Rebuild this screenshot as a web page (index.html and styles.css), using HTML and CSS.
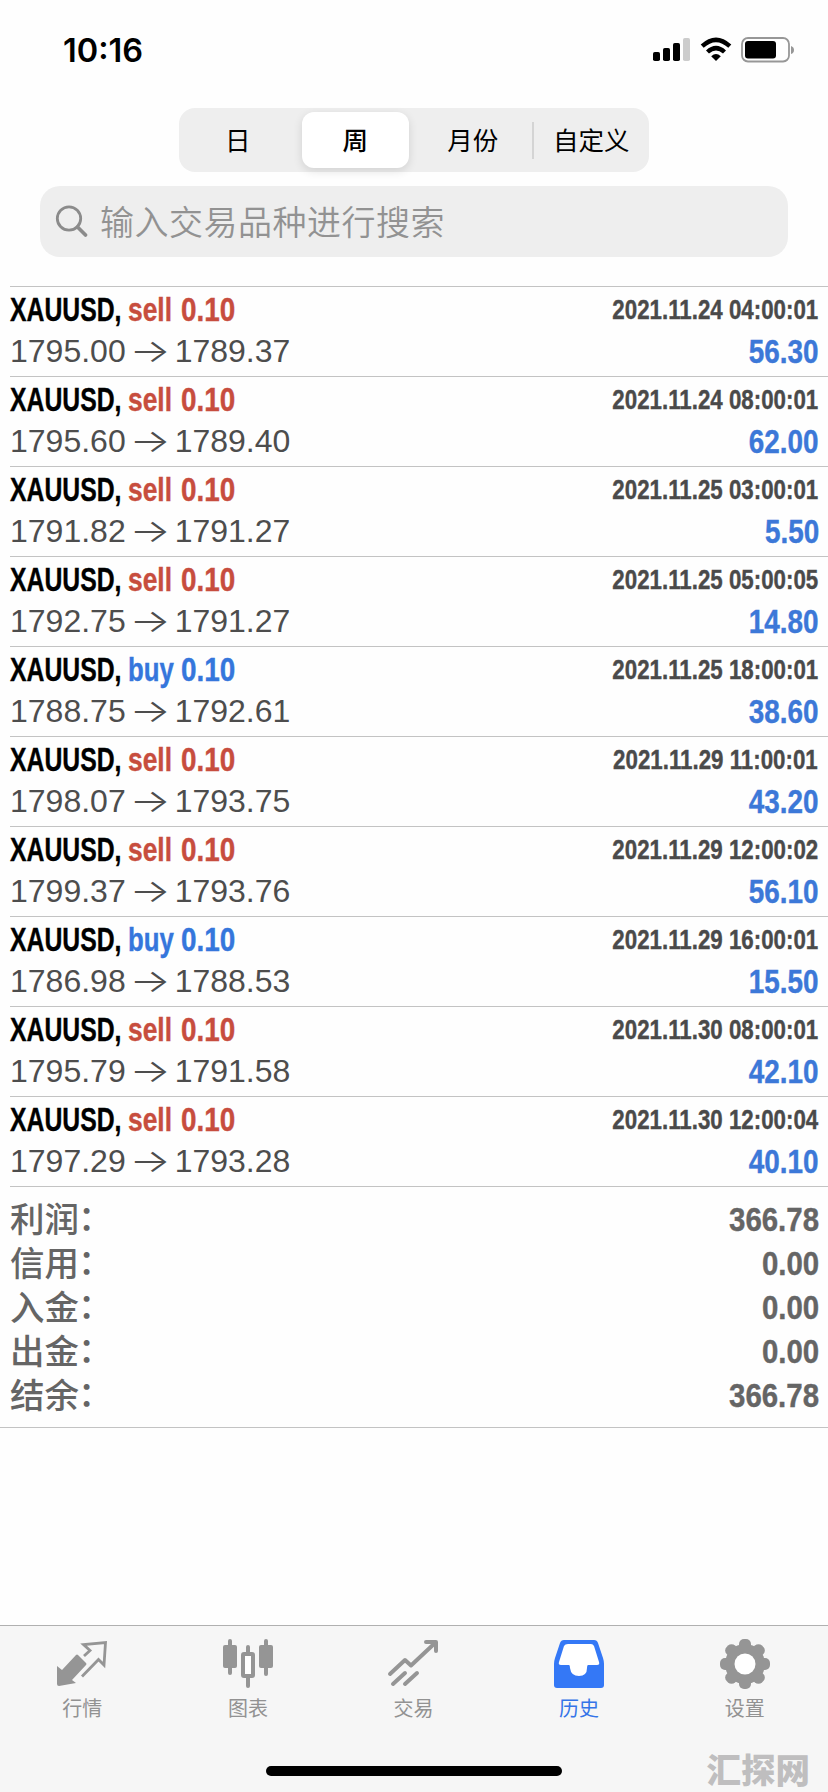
FILE: index.html
```html
<!DOCTYPE html>
<html lang="zh-CN">
<head>
<meta charset="utf-8">
<title>历史</title>
<link rel="stylesheet" href="styles.css">
</head>
<body>
<div class="phone">
  <header class="status">
    <div class="time">10:16</div>
    <div class="indicators">
      <svg width="38" height="24" viewBox="0 0 38 24"><rect x="0" y="14" width="7" height="9" rx="1.8"/><rect x="10" y="10" width="7" height="13" rx="1.8"/><rect x="20" y="5" width="7" height="18" rx="1.8"/><rect x="30" y="0" width="7" height="23" rx="1.8" fill="#ccc"/></svg>
      <svg class="wifi" width="32" height="24" viewBox="0 0 32 24"><path d="M2.200 9.200Q16-3.500 29.800 9.200M7.500 15Q16 7.200 24.500 15" fill="none" stroke="#000" stroke-width="4.400"/><path d="M11.200 19.200Q16 15 20.800 19.200L16 24Z"/></svg>
      <svg class="battery" width="54" height="26" viewBox="0 0 54 26"><rect x="1" y="1" width="47" height="23.500" rx="6" fill="none" stroke="#979797" stroke-width="1.800"/><rect x="4" y="4" width="31" height="17.500" rx="3"/><path d="M50 9Q53 10 53 13T50 17Z" fill="#979797"/></svg>
    </div>
  </header>
  <nav class="segments">
    <span class="segment">日</span>
    <span class="segment selected">周</span>
    <span class="segment">月份</span>
    <span class="segment divided">自定义</span>
  </nav>
  <div class="search">
    <svg width="34" height="34" viewBox="0 0 34 34"><circle cx="14" cy="13.500" r="11.700" fill="none" stroke="#8b8b8b" stroke-width="2.800"/><path d="M22.500 22L30.500 30" stroke="#8b8b8b" stroke-width="3.800" stroke-linecap="round"/></svg>
    <span>输入交易品种进行搜索</span>
  </div>
  <main class="deals" id="deals"></main>
  <section class="summary">
    <div class="total"><span>利润<i>：</i></span><b>366.78</b></div>
    <div class="total"><span>信用<i>：</i></span><b>0.00</b></div>
    <div class="total"><span>入金<i>：</i></span><b>0.00</b></div>
    <div class="total"><span>出金<i>：</i></span><b>0.00</b></div>
    <div class="total"><span>结余<i>：</i></span><b>366.78</b></div>
  </section>
  <footer class="tabs">
    <a class="tab"><svg viewBox="0 0 50 50"><path d="M0 27L5 31 19 16Q20 15 21 16L29 24Q30 25 29 26L15 41 19 44 2 47Q0 47 0 45Z" fill="#959595"/><path d="M27 17L33 11.500 26.500 5.500 48.500 3.500 47 26 41.500 20.500 25 37.500" fill="none" stroke="#959595" stroke-width="2.800"/></svg><span>行情</span></a>
    <a class="tab"><svg viewBox="0 0 50 50"><g fill="#959595"><rect y="6" width="14" height="23" rx="2"/><rect x="5" y="0" width="4" height="36" rx="2"/><rect x="36" y="6" width="14" height="23" rx="2"/><rect x="41" y="0" width="4" height="37" rx="2"/><rect x="23" y="6" width="4" height="43" rx="2"/></g><rect x="20" y="15" width="10" height="22" rx="1" fill="#fff" stroke="#959595" stroke-width="4"/></svg><span>图表</span></a>
    <a class="tab"><svg viewBox="0 0 50 50"><path d="M2 35L17 21 23 26.500 47 4M38 3H48V12M5 45L17 34M17 45L29 34" fill="none" stroke="#959595" stroke-width="4" stroke-linecap="round" stroke-linejoin="round"/></svg><span>交易</span></a>
    <a class="tab active"><svg viewBox="0 0 50 50"><path d="M10 1H40Q43 1 44 4L49 19Q50 22 50 25V46Q50 49 47 49H3Q0 49 0 46V25Q0 22 1 19L6 4Q7 1 10 1Z" fill="#3478f6"/><path d="M14 5H37Q39 5 40 7L45 23Q46 26 43 26H34Q33 26 33 29Q33 37 25 37T16 29Q16 26 15 26H7Q4 26 5 23L10 7Q11 5 14 5Z" fill="#fff"/></svg><span>历史</span></a>
    <a class="tab"><svg viewBox="-25 -25 50 50"><g fill="#959595"><circle r="20"/><g id="teeth"><rect x="-6" y="-25" width="12" height="50" rx="5"/><rect x="-25" y="-6" width="50" height="12" rx="5"/></g><use href="#teeth" transform="rotate(45)"/></g><circle r="10.500" fill="#fff"/></svg><span>设置</span></a>
    <div class="home"></div>
    <div class="watermark">汇探网</div>
  </footer>
</div>
<script src="script.js"></script>
</body>
</html>
```

FILE: styles.css
```css
* { box-sizing: border-box; }
body { margin: 0; background: #fefefe; }
.phone {
  width: 828px;
  height: 1792px;
  display: flex;
  flex-direction: column;
  background: #fefefe;
  overflow: hidden;
  font-family: "Liberation Sans", "Noto Sans CJK SC", sans-serif;
}
.status {
  height: 108px;
  flex: none;
  display: flex;
  justify-content: space-between;
  padding: 31px 33px 0 63px;
}
.time { font: 600 32.500px/40px Inter, sans-serif; }
.indicators { display: flex; align-items: flex-start; padding-top: 7px; }
.wifi { margin: -1px 0 0 9px; }
.battery { margin: -1px 0 0 9px; }
.segments {
  flex: none;
  width: 470px;
  height: 64px;
  margin-left: 179px;
  display: grid;
  grid-template-columns: repeat(4, 1fr);
  align-items: center;
  background: #eee;
  border-radius: 16px;
}
.segment {
  padding-bottom: 3px;
  text-align: center;
  font: 400 25.500px/34px "Noto Sans CJK SC", sans-serif;
  color: #000;
}
.selected {
  height: 56px;
  line-height: 53px;
  margin: 0 5px;
  background: #fff;
  border-radius: 12px;
  font-weight: 500;
  box-shadow: 0 3px 10px rgba(0, 0, 0, .12);
}
.divided { border-left: 2px solid #d4d4d4; }
.search {
  flex: none;
  width: 748px;
  height: 71px;
  margin: 14px 0 29px 40px;
  padding-left: 15px;
  display: flex;
  align-items: center;
  gap: 11px;
  background: #eee;
  border-radius: 20px;
  color: #929292;
  font: 350 34px/50px "Noto Sans CJK SC", sans-serif;
  letter-spacing: .5px;
}
.search span { padding-bottom: 2px; }
.deal {
  height: 90px;
  margin-left: 10px;
  padding: 3px 10px 0 0;
  border-top: 1px solid #c3c3c3;
}
.line { display: flex; justify-content: space-between; white-space: nowrap; height: 40px; line-height: 40px; }
.line + .line { height: 42px; line-height: 42px; }
.title, .date, .profit { -webkit-text-stroke: .4px currentColor; }
.title { display: flex; font-size: 33px; font-weight: 700; }
.title span { transform-origin: left center; }
.symbol { width: 118px; transform: scaleX(.75); }
.action { width: 52.500px; transform: scaleX(.8); }
.lot { transform: scaleX(.845); }
.action.buy { transform: scaleX(.78); }
.sell { color: #c74d3e; }
.buy { color: #3576dc; }
.date {
  font-size: 27px;
  font-weight: 700;
  color: #4a4a4a;
  transform: scaleX(.826);
  transform-origin: right center;
}
.prices { display: flex; font-size: 32px; color: #4d4d4d; }
.prices span:last-child { margin-left: -1px; }
.arrow {
  width: 50px;
  text-align: center;
  font-family: Inter, sans-serif;
  font-weight: 300;
  transform: translateX(-1px) scaleX(1.350);
}
.profit {
  font-size: 33px;
  font-weight: 700;
  line-height: 44px;
  color: #3c78d8;
  transform: translateX(1px) scaleX(.845);
  transform-origin: right center;
}
.summary {
  flex: none;
  height: 242px;
  border-bottom: 1px solid #c3c3c3;
  padding-right: 10px;
}
.summary::before { content: ""; display: block; margin: 0 -10px 10px 10px; border-top: 1px solid #c3c3c3; }
.total {
  display: flex;
  justify-content: space-between;
  height: 44px;
  padding-left: 10px;
  line-height: 44px;
  color: #656565;
}
.total span {
  margin-top: 1px;
  font-family: "Liberation Sans", "Noto Sans CJK SC", sans-serif;
  font-size: 34.500px;
  font-weight: 500;
}
.total i {
  display: inline-block;
  height: 40px;
  line-height: 40px;
  font-style: normal;
  transform: translate(-1px, -2px);
}
.total b {
  font: 700 34px/44px "Liberation Sans", sans-serif;
  -webkit-text-stroke: .4px currentColor;
  transform: translateX(1px) scaleX(.865);
  transform-origin: right center;
}
.tabs {
  position: relative;
  height: 167px;
  margin-top: auto;
  padding-top: 13px;
  border-top: 1px solid #b0b0b0;
  background: #f6f6f6;
  display: grid;
  grid-template-columns: repeat(5, 1fr);
  align-items: start;
}
.tab {
  display: flex;
  flex-direction: column;
  align-items: center;
  padding-right: 1px;
  color: #929292;
  font: 400 20px/28px "Noto Sans CJK SC", sans-serif;
}
.tab svg { width: 50px; height: 50px; margin-bottom: 5px; overflow: visible; }
.active { color: #3474e8; }
.home {
  position: absolute;
  left: 266px;
  bottom: 16px;
  width: 296px;
  height: 10px;
  border-radius: 5px;
  background: #000;
}
.watermark {
  position: absolute;
  right: 18px;
  bottom: -1px;
  color: #bfbebf;
  font: 900 34.500px/50px "Noto Sans CJK SC", sans-serif;
}
```

FILE: script.js
```js
const deals = [
  ["sell", "1795.00", "1789.37", "2021.11.24 04:00:01", "56.30"],
  ["sell", "1795.60", "1789.40", "2021.11.24 08:00:01", "62.00"],
  ["sell", "1791.82", "1791.27", "2021.11.25 03:00:01", "5.50"],
  ["sell", "1792.75", "1791.27", "2021.11.25 05:00:05", "14.80"],
  ["buy", "1788.75", "1792.61", "2021.11.25 18:00:01", "38.60"],
  ["sell", "1798.07", "1793.75", "2021.11.29 11:00:01", "43.20"],
  ["sell", "1799.37", "1793.76", "2021.11.29 12:00:02", "56.10"],
  ["buy", "1786.98", "1788.53", "2021.11.29 16:00:01", "15.50"],
  ["sell", "1795.79", "1791.58", "2021.11.30 08:00:01", "42.10"],
  ["sell", "1797.29", "1793.28", "2021.11.30 12:00:04", "40.10"]
];
document.getElementById("deals").innerHTML = deals.map(([side, open, close, date, profit]) => `
  <article class="deal">
    <div class="line">
      <div class="title"><span class="symbol">XAUUSD,</span><span class="action ${side}">${side}</span><span class="lot ${side}">0.10</span></div>
      <div class="date">${date}</div>
    </div>
    <div class="line">
      <div class="prices"><span>${open}</span><span class="arrow">→</span><span>${close}</span></div>
      <div class="profit">${profit}</div>
    </div>
  </article>`).join("");
```
